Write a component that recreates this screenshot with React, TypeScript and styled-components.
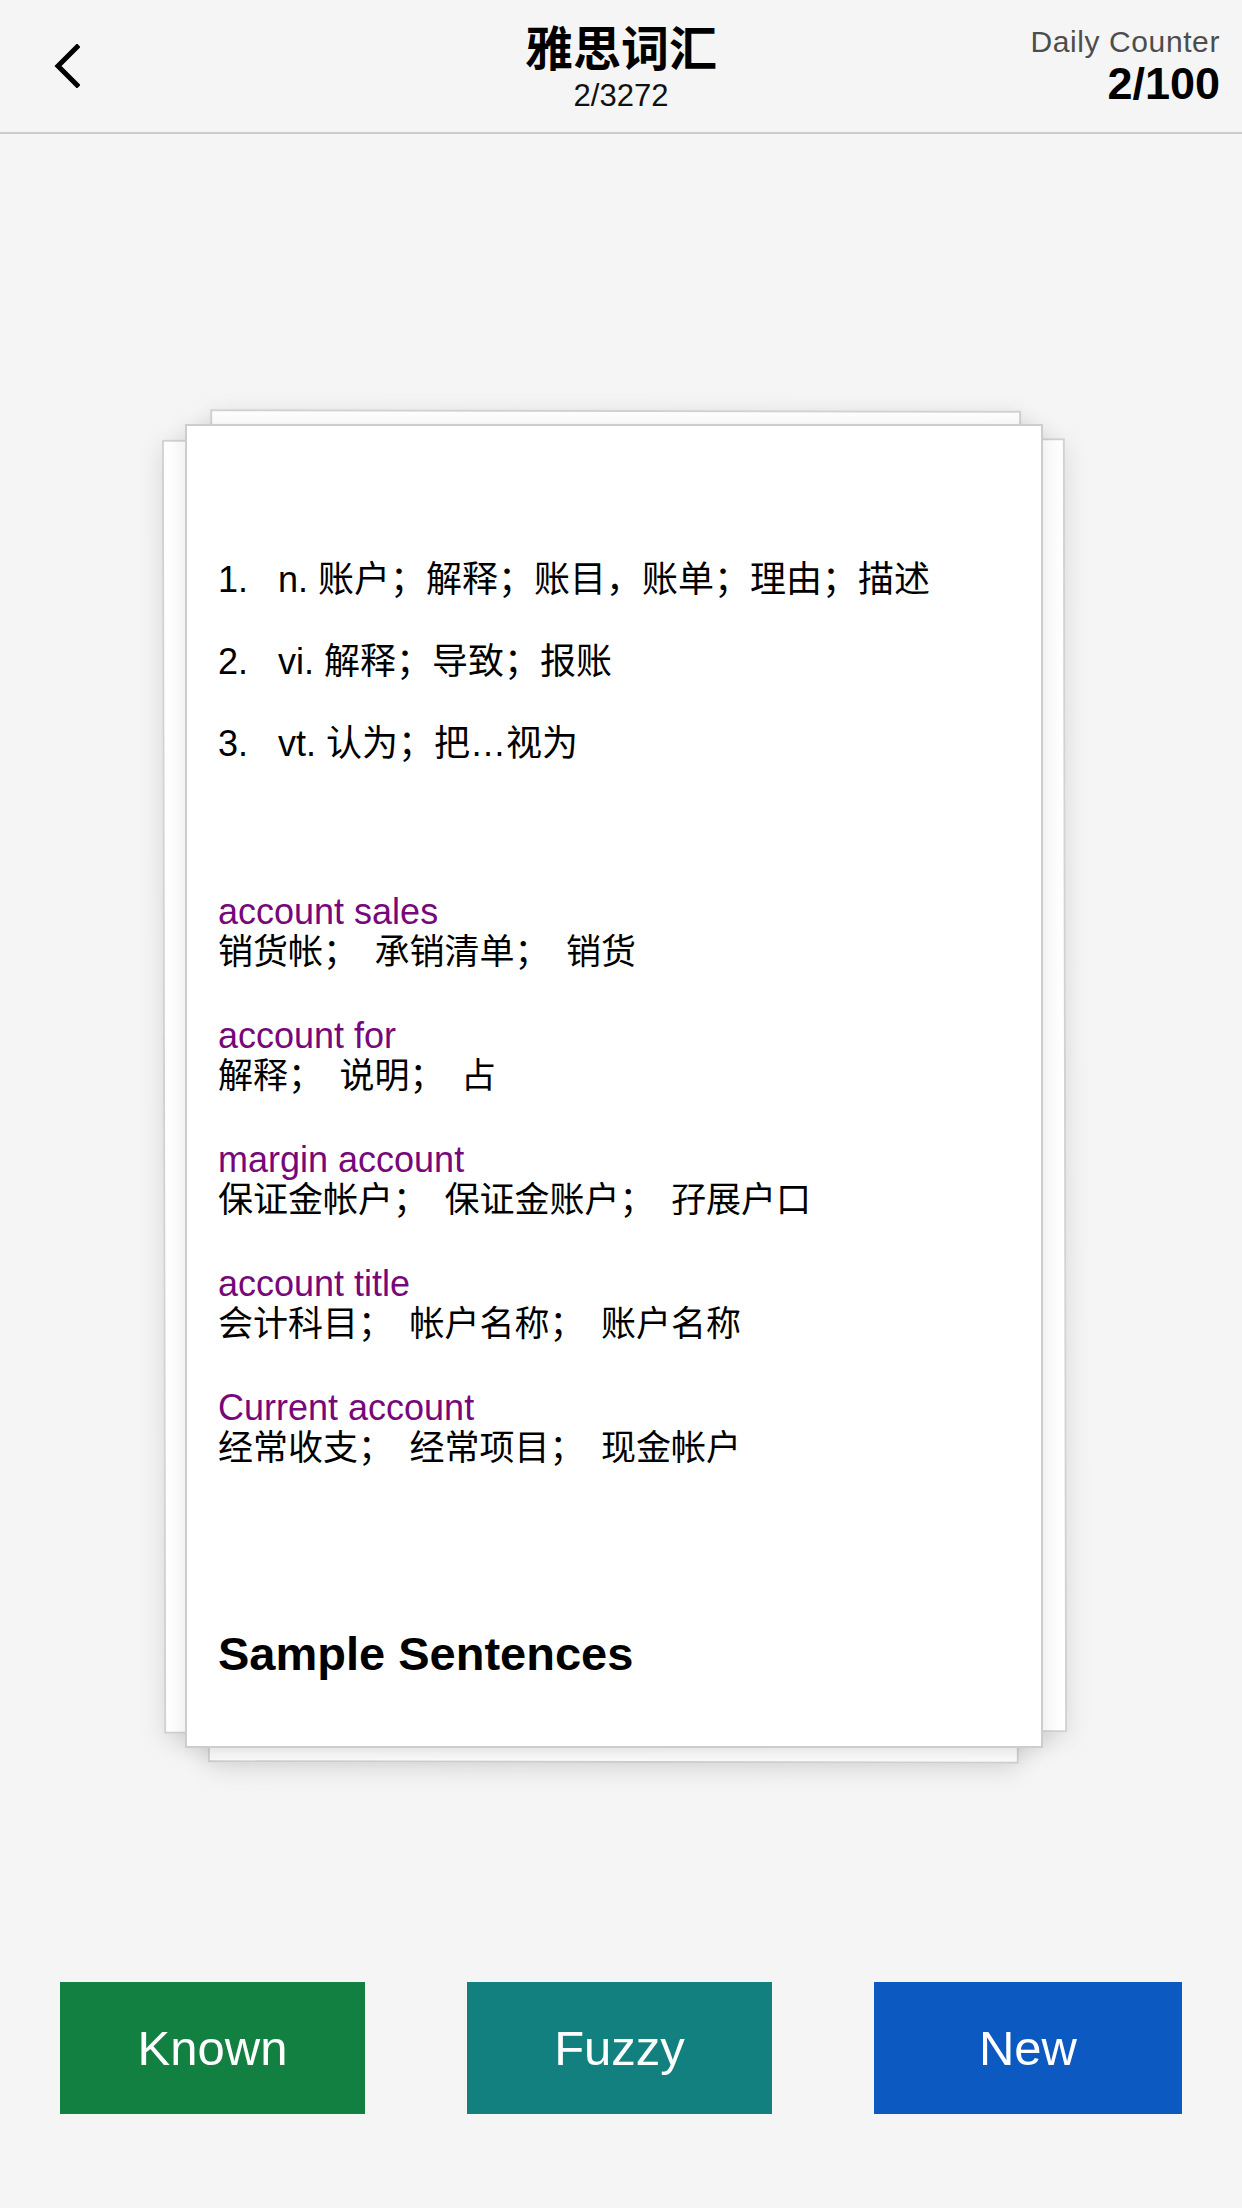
import React from "react";
import styled, { createGlobalStyle } from "styled-components";

const GlobalStyle = createGlobalStyle`
  html, body {
    margin: 0;
    padding: 0;
    background: #f5f5f5;
  }
  body {
    font-family: "Liberation Sans", "Noto Sans CJK SC", sans-serif;
    color: #000;
  }
  * {
    box-sizing: border-box;
  }
`;

const Page = styled.div`
  width: 1242px;
  min-height: 2208px;
  display: flex;
  flex-direction: column;
  background: #f5f5f5;
`;

const Header = styled.header`
  height: 134px;
  display: grid;
  grid-template-columns: 1fr auto 1fr;
  align-items: start;
  padding: 0 22px;
  border-bottom: 2px solid #cbcbcb;
`;

const BackButton = styled.button`
  justify-self: start;
  margin: 44px 0 0 32px;
  width: 30px;
  height: 44px;
  padding: 0;
  border: none;
  background: none;
  display: flex;
  align-items: center;
  justify-content: flex-start;
`;

const TitleBlock = styled.div`
  padding-top: 17px;
  display: flex;
  flex-direction: column;
  align-items: center;
`;

const Title = styled.h1`
  margin: 0;
  font-family: "Noto Sans CJK SC", sans-serif;
  font-size: 48px;
  font-weight: 700;
  line-height: 56px;
`;

const Subtitle = styled.div`
  margin-top: 6px;
  font-size: 31px;
  line-height: 34px;
  color: #111;
`;

const Counter = styled.div`
  justify-self: end;
  padding-top: 24px;
  display: flex;
  flex-direction: column;
  align-items: flex-end;
`;

const CounterLabel = styled.div`
  font-size: 30px;
  line-height: 36px;
  letter-spacing: 0.6px;
  color: #4d4d4d;
`;

const CounterValue = styled.div`
  font-size: 45px;
  line-height: 48px;
  font-weight: 700;
`;

const Main = styled.main`
  display: flex;
  flex-direction: column;
  align-items: center;
  padding-top: 290px;
`;

const Stack = styled.div`
  position: relative;
  width: 858px;
  height: 1324px;
  margin-right: 14px;
`;

const Sheet = styled.div<{ $top: number; $right: number; $bottom: number; $left: number; $tilt: number }>`
  position: absolute;
  top: ${(p) => p.$top}px;
  right: ${(p) => p.$right}px;
  bottom: ${(p) => p.$bottom}px;
  left: ${(p) => p.$left}px;
  background: #fff;
  border: 2px solid #d2d2d2;
  transform: rotate(${(p) => p.$tilt}deg);
  box-shadow: 0 6px 26px rgba(0, 0, 0, 0.12);
`;

const Card = styled.article`
  position: relative;
  z-index: 1;
  width: 100%;
  height: 100%;
  overflow: hidden;
  background: #fff;
  border: 2px solid #cdcdcd;
  box-shadow: 0 4px 22px rgba(0, 0, 0, 0.1);
  padding: 132px 31px 0;
`;

const DefList = styled.ol`
  list-style: none;
  margin: 0;
  padding: 0;
  display: flex;
  flex-direction: column;
  gap: 38px;
`;

const DefItem = styled.li`
  display: flex;
  font-size: 36px;
  line-height: 44px;
`;

const DefNum = styled.span`
  width: 60px;
  flex: none;
`;

const Phrases = styled.div`
  margin-top: 126px;
  display: flex;
  flex-direction: column;
  gap: 44px;
`;

const Phrase = styled.div`
  display: flex;
  flex-direction: column;
`;

const PhraseText = styled.div`
  font-size: 36px;
  line-height: 40px;
  color: #77077a;
`;

const PhraseMeaning = styled.div`
  font-size: 35px;
  line-height: 40px;
  white-space: pre;
  word-spacing: -1.5px;
`;

const SectionTitle = styled.h2`
  margin: 158px 0 0;
  font-size: 47px;
  line-height: 56px;
  font-weight: 700;
`;

const ButtonRow = styled.div`
  width: 100%;
  margin-top: 234px;
  padding: 0 60px;
  display: flex;
  justify-content: space-between;
`;

const ActionButton = styled.button<{ $bg: string; $w: number }>`
  width: ${(p) => p.$w}px;
  height: 132px;
  border: none;
  background: ${(p) => p.$bg};
  color: #fff;
  font-family: "Liberation Sans", sans-serif;
  font-size: 49px;
  display: flex;
  align-items: center;
  justify-content: center;
`;

const definitions = [
  { id: 1, pos: "n.", text: "账户；解释；账目，账单；理由；描述" },
  { id: 2, pos: "vi.", text: "解释；导致；报账" },
  { id: 3, pos: "vt.", text: "认为；把…视为" },
];

const phrases = [
  { id: 1, en: "account sales", zh: "销货帐；  承销清单；  销货" },
  { id: 2, en: "account for", zh: "解释；  说明；  占" },
  { id: 3, en: "margin account", zh: "保证金帐户；  保证金账户；  孖展户口" },
  { id: 4, en: "account title", zh: "会计科目；  帐户名称；  账户名称" },
  { id: 5, en: "Current account", zh: "经常收支；  经常项目；  现金帐户" },
];

const buttons = [
  { id: "known", label: "Known", bg: "#118040", w: 305 },
  { id: "fuzzy", label: "Fuzzy", bg: "#11807f", w: 305 },
  { id: "new", label: "New", bg: "#0b59c1", w: 308 },
];

export default function App() {
  return (
    <Page>
      <GlobalStyle />
      <Header>
        <BackButton aria-label="back">
          <svg width="26" height="44" viewBox="0 0 26 44">
            <path d="M23 3 L4 22 L23 41" fill="none" stroke="#000" strokeWidth="5" strokeLinecap="square" />
          </svg>
        </BackButton>
        <TitleBlock>
          <Title>雅思词汇</Title>
          <Subtitle>2/3272</Subtitle>
        </TitleBlock>
        <Counter>
          <CounterLabel>Daily Counter</CounterLabel>
          <CounterValue>2/100</CounterValue>
        </Counter>
      </Header>

      <Main>
        <Stack>
          <Sheet $top={-14} $right={23} $bottom={-15} $left={24} $tilt={0.1} />
          <Sheet $top={15} $right={-23} $bottom={15} $left={-22} $tilt={-0.1} />
          <Card>
            <DefList>
              {definitions.map((d) => (
                <DefItem key={d.id}>
                  <DefNum>{d.id}.</DefNum>
                  <span>
                    {d.pos} {d.text}
                  </span>
                </DefItem>
              ))}
            </DefList>

            <Phrases>
              {phrases.map((p) => (
                <Phrase key={p.id}>
                  <PhraseText>{p.en}</PhraseText>
                  <PhraseMeaning>{p.zh}</PhraseMeaning>
                </Phrase>
              ))}
            </Phrases>

            <SectionTitle>Sample Sentences</SectionTitle>
          </Card>
        </Stack>

        <ButtonRow>
          {buttons.map((b) => (
            <ActionButton key={b.id} $bg={b.bg} $w={b.w}>
              {b.label}
            </ActionButton>
          ))}
        </ButtonRow>
      </Main>
    </Page>
  );
}
